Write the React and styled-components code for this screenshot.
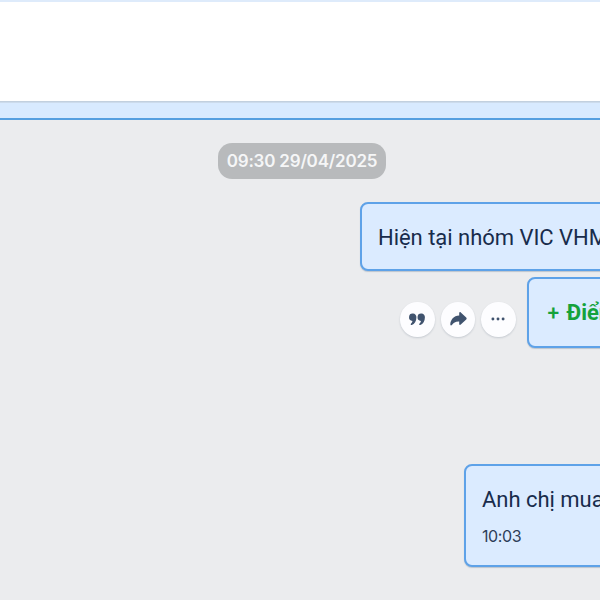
import React from 'react';
import styled, { createGlobalStyle, css } from 'styled-components';

const GlobalStyle = createGlobalStyle`
  * { box-sizing: border-box; }
  body { margin: 0; overflow: hidden; }
`;

const Window = styled.div`
  display: flex;
  flex-direction: column;
  width: 600px;
  height: 600px;
  overflow: hidden;
  background: #ebecee;
  color: #182c4c;
  font-family: Roboto, "Noto Sans", sans-serif;
`;

const Header = styled.header`
  flex: none;
  height: 102px;
  background: #fff;
  border-top: 2px solid #deebfb;
  border-bottom: 1px solid #c2d0df;
`;

const NoticeBar = styled.div`
  flex: none;
  height: 18px;
  background: #d8eaff;
  border-top: 1px solid #ccdbec;
  border-bottom: 2px solid #559fe0;
`;

const Conversation = styled.main`
  flex: 1;
  display: flex;
  flex-direction: column;
  align-items: flex-start;
  padding-top: 23px;
  overflow: hidden;
`;

const DateBadge = styled.time`
  flex: none;
  display: flex;
  align-items: center;
  justify-content: center;
  width: 168px;
  height: 36px;
  margin: 0 0 23px 218px;
  border-radius: 14px;
  background: #b8babc;
  color: #f5f6f7;
  font: 600 17px/36px Inter, sans-serif;
  letter-spacing: -0.2px;
  white-space: nowrap;
`;

const MessageRow = styled.div`
  flex: none;
  display: flex;
  align-items: flex-start;
  padding-left: ${(p) => p.$indent}px;
  margin-bottom: ${(p) => p.$gap}px;
`;

const Bubble = styled.article`
  flex: none;
  width: 320px;
  height: ${(p) => p.$height}px;
  padding: ${(p) => p.$padTop}px 0 0 ${(p) => p.$padLeft}px;
  border: 2px solid #5ea2e8;
  border-radius: 8px;
  background: #dbebff;
  box-shadow: 0 1px 1px rgba(80, 105, 135, 0.3);
  white-space: nowrap;
`;

const MessageText = styled.p`
  margin: 0;
  font-size: 22px;
  line-height: 30px;
  letter-spacing: -0.03px;
  ${(p) => p.$highlight && css`
    color: #15a23b;
    font-weight: 700;
  `}
`;

const Plus = styled.span`
  font-weight: 500;
  font-size: 21px;
  margin-right: 2px;
`;

const Stamp = styled.time`
  display: block;
  margin-top: 11px;
  color: #2d3f59;
  font: 400 16px/20px Inter, sans-serif;
  letter-spacing: -0.4px;
`;

const Actions = styled.div`
  display: flex;
  gap: 6px;
  margin: 25px 11px 0 0;
`;

const ActionButton = styled.button`
  display: grid;
  place-items: center;
  width: 34.5px;
  height: 34.5px;
  padding: 0 0 1px;
  border: 0;
  border-radius: 50%;
  background: #fdfdff;
  color: #40536e;
  box-shadow: 0 1px 2px rgba(30, 50, 80, 0.18);

  svg { display: block; }
`;

const QuoteIcon = () => (
  <svg width="18" height="18" viewBox="0 0 18 18" fill="currentColor">
    <path d="M5 3.6a3.5 3.5 0 0 1 3.4 3.8C8.4 11 6.6 13.9 3.8 15c-.8.3-1.5-.6-.9-1.2.8-.7 1.4-1.7 1.6-2.8A3.6 3.6 0 1 1 5 3.6Z" />
    <path d="M13.5 3.6a3.5 3.5 0 0 1 3.4 3.8c0 3.6-1.8 6.5-4.6 7.6-.8.3-1.5-.6-.9-1.2.8-.7 1.4-1.7 1.6-2.8a3.6 3.6 0 1 1 .5-7.4Z" />
  </svg>
);

const ShareIcon = () => (
  <svg width="20" height="18" viewBox="0 0 20 18" fill="currentColor">
    <path d="M11.2 3.2c0-1.1.8-1.5 1.6-.8l5.4 5.2c.6.6.6 1.3 0 1.9l-5.4 5.1c-.8.7-1.6.3-1.6-.7v-2.5c-3.5-.2-5.6 1-7.3 3.6-.5.8-1.6.6-1.6-.4.1-4.7 3.4-8.7 8.9-9Z" />
  </svg>
);

const MoreIcon = () => (
  <svg width="18" height="18" viewBox="0 0 18 18" fill="currentColor">
    <circle cx="3.9" cy="9" r="1.45" />
    <circle cx="9" cy="9" r="1.45" />
    <circle cx="14.1" cy="9" r="1.45" />
  </svg>
);

export default function App() {
  return (
    <>
      <GlobalStyle />
      <Window>
        <Header />
        <NoticeBar />
        <Conversation>
          <DateBadge>09:30 29/04/2025</DateBadge>
          <MessageRow $indent={360} $gap={6}>
            <Bubble $height={69} $padTop={19} $padLeft={16}>
              <MessageText>Hiện tại nhóm VIC VHM</MessageText>
            </Bubble>
          </MessageRow>
          <MessageRow $indent={400} $gap={116}>
            <Actions>
              <ActionButton aria-label="Trả lời"><QuoteIcon /></ActionButton>
              <ActionButton aria-label="Chia sẻ"><ShareIcon /></ActionButton>
              <ActionButton aria-label="Thêm"><MoreIcon /></ActionButton>
            </Actions>
            <Bubble $height={71} $padTop={19} $padLeft={19}>
              <MessageText $highlight><Plus>+</Plus> Điểm mua</MessageText>
            </Bubble>
          </MessageRow>
          <MessageRow $indent={464} $gap={0}>
            <Bubble $height={103} $padTop={19} $padLeft={16}>
              <MessageText>Anh chị mua</MessageText>
              <Stamp>10:03</Stamp>
            </Bubble>
          </MessageRow>
        </Conversation>
      </Window>
    </>
  );
}
